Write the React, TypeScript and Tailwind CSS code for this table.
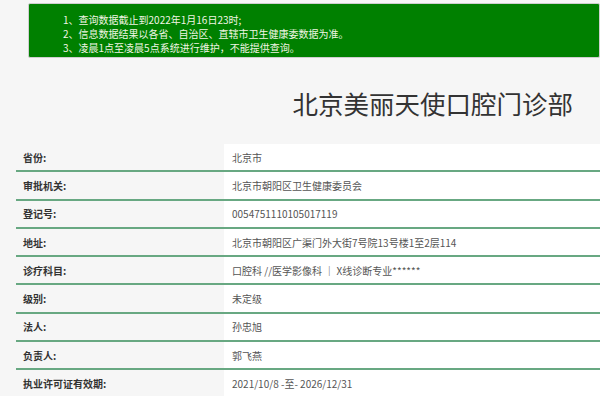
import React from "react";

const notices = [
	"1、查询数据截止到2022年1月16日23时;",
	"2、信息数据结果以各省、自治区、直辖市卫生健康委数据为准。",
	"3、凌晨1点至凌晨5点系统进行维护，不能提供查询。",
];

const rows: { label: string; value: string }[] = [
	{ label: "省份:", value: "北京市" },
	{ label: "审批机关:", value: "北京市朝阳区卫生健康委员会" },
	{ label: "登记号:", value: "0054751110105017119" },
	{ label: "地址:", value: "北京市朝阳区广渠门外大街7号院13号楼1至2层114" },
	{ label: "诊疗科目:", value: "口腔科 //医学影像科 ｜ X线诊断专业******" },
	{ label: "级别:", value: "未定级" },
	{ label: "法人:", value: "孙忠旭" },
	{ label: "负责人:", value: "郭飞燕" },
	{ label: "执业许可证有效期:", value: "2021/10/8 -至- 2026/12/31" },
];

export default function App() {
	return (
		<div className="w-[600px] h-[396px] overflow-hidden bg-[#f6f6f6] font-['Noto_Sans_CJK_SC','Noto_Sans',sans-serif]">
			{/* notice box */}
			<div className="pt-[3px] pl-[28px]">
				<div className="h-[55px] bg-[#008000] border border-[#cfcfcf] rounded-[2px] pl-[34px] pt-[9px] text-[10px] leading-[14px] text-[#f1f5e4]">
					{notices.map((n) => (
						<div key={n}>{n}</div>
					))}
				</div>
			</div>

			{/* title */}
			<div className="h-[86px] pt-[4px] flex items-center justify-end pr-[27px]">
				<h1 className="text-[25.5px] leading-none text-[#333] tracking-[0px]">
					北京美丽天使口腔门诊部
				</h1>
			</div>

			{/* detail table */}
			<div className="ml-[16px]">
				{rows.map((row) => (
					<div
						key={row.label}
						className="flex h-[28.3px] border-b-2 border-[#68a882]">
						<div className="w-[208px] pl-[7px] flex items-center text-[10px] font-bold text-[#333]">
							{row.label}
						</div>
						<div className="flex-1 bg-white pl-[8px] flex items-center text-[10px] text-[#555]">
							{row.value}
						</div>
					</div>
				))}
			</div>
		</div>
	);
}
